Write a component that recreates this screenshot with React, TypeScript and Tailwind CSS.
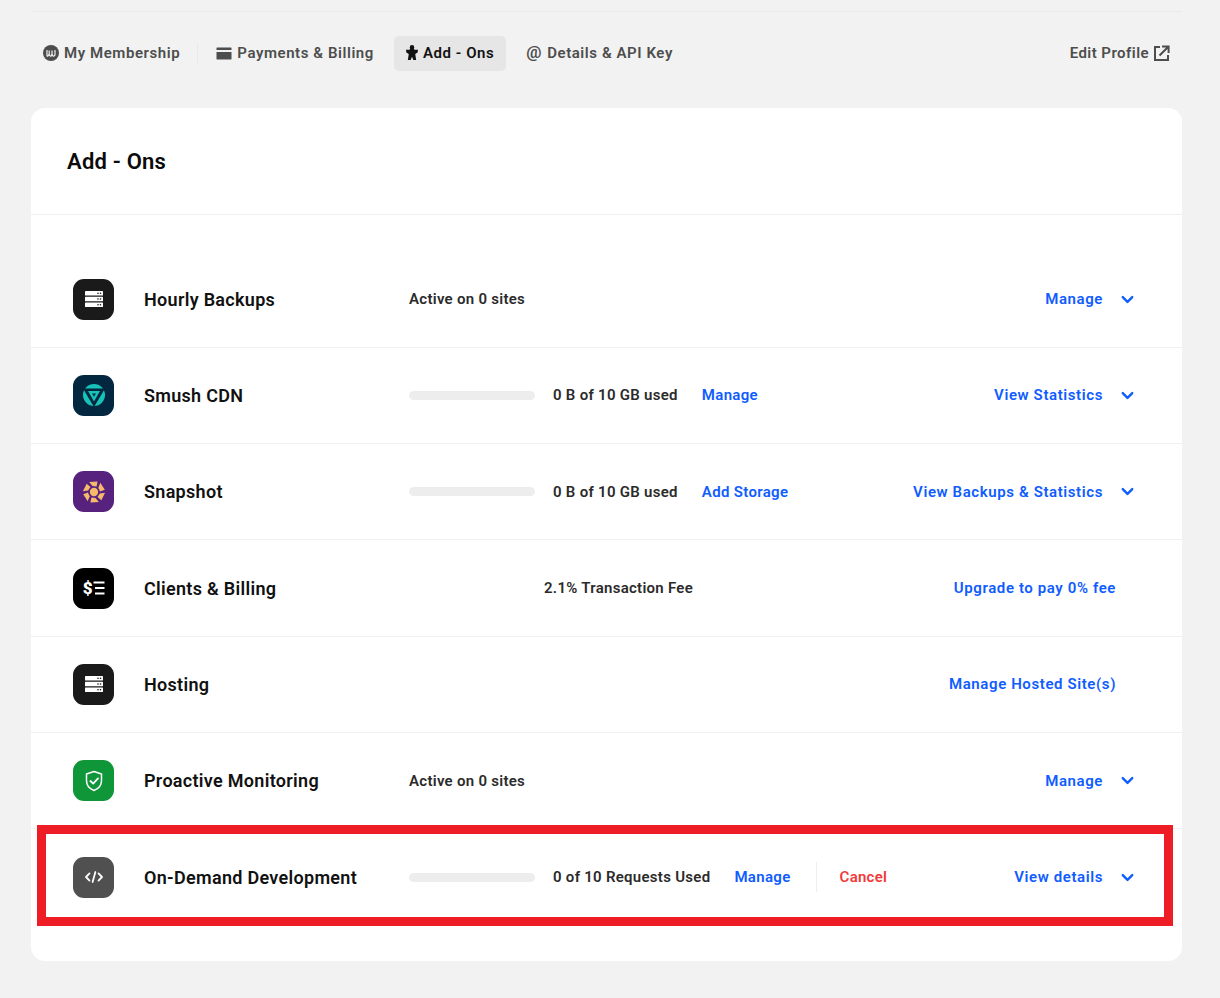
import { ChevronDown } from 'lucide-react';
import type { ReactNode } from 'react';

function ServerIcon() {
  return (
    <svg width="20" height="20" viewBox="0 0 20 20" fill="none">
      <rect x="1" y="2" width="18" height="4.6" rx="0.6" fill="#fff" />
      <rect x="1" y="7.7" width="18" height="4.6" rx="0.6" fill="#fff" />
      <rect x="1" y="13.4" width="18" height="4.6" rx="0.6" fill="#fff" />
      <circle cx="14" cy="4.3" r="0.8" fill="#1a1a1a" />
      <circle cx="16.5" cy="4.3" r="0.8" fill="#1a1a1a" />
      <circle cx="14" cy="10" r="0.8" fill="#1a1a1a" />
      <circle cx="16.5" cy="10" r="0.8" fill="#1a1a1a" />
      <circle cx="14" cy="15.7" r="0.8" fill="#1a1a1a" />
      <circle cx="16.5" cy="15.7" r="0.8" fill="#1a1a1a" />
    </svg>
  );
}

function SmushIcon() {
  return (
    <svg width="24" height="24" viewBox="0 0 24 24">
      <circle cx="12" cy="12" r="11" fill="#17c3b8" />
      <path d="M1 5.6 H23 L12 24 Z" fill="#03273f" />
      <path d="M6 8 H18 L12 18.4 Z" fill="#17c3b8" />
      <path d="M10 10.4 H14 L12 13.8 Z" fill="#03273f" />
    </svg>
  );
}

function SnapshotIcon() {
  return (
    <svg width="24" height="24" viewBox="0 0 22 22" fill="#f7b96b">
      <circle cx="11" cy="11" r="3.8" />
      {[0, 60, 120, 180, 240, 300].map((a) => (
        <path key={a} d="M6.6 1.8 L14.2 1.4 L13.4 5.9 L9.6 5.6 Z" transform={`rotate(${a} 11 11)`} />
      ))}
    </svg>
  );
}

function ClientsIcon() {
  return (
    <svg width="24" height="20" viewBox="0 0 24 20" fill="#fff">
      <rect x="11.5" y="3.5" width="11" height="2" />
      <rect x="13" y="9" width="9.5" height="2" />
      <rect x="13" y="14.5" width="9.5" height="2" />
      <text x="0.8" y="16" fontFamily="Roboto, sans-serif" fontWeight="900" fontSize="17">$</text>
    </svg>
  );
}

function ShieldIcon() {
  return (
    <svg width="20" height="22" viewBox="0 0 20 22" fill="none" stroke="#fff" strokeLinejoin="round" strokeLinecap="round">
      <path d="M10 1.5 L17.5 4 V10.5 C17.5 15.5 14 19 10 20.5 C6 19 2.5 15.5 2.5 10.5 V4 Z" strokeWidth="1.5" />
      <path d="M6.4 11 L9.2 13.6 L14 8.4" strokeWidth="1.8" />
    </svg>
  );
}

function CodeIcon() {
  return (
    <svg width="20" height="14" viewBox="0 0 20 14" fill="none" stroke="#fff" strokeWidth="1.8" strokeLinecap="round" strokeLinejoin="round">
      <path d="M5.5 3.4 L2 7 L5.5 10.6" />
      <path d="M14.5 3.4 L18 7 L14.5 10.6" />
      <path d="M11.4 2 L8.6 12" />
    </svg>
  );
}

function MembershipIcon() {
  return (
    <svg className="-translate-y-px" width="16" height="16" viewBox="0 0 16 16" fill="none">
      <circle cx="8" cy="8" r="8" fill="#4d4d4d" />
      <path d="M4 5 V10.5 Q4 11.5 5 11 L6.2 9 V5.5 M6.2 9 Q7 11.6 8.2 11 L9 9 V5.5 M9 9 Q9.8 11.6 11 11 Q12 10.5 12 9.5 V5" stroke="#f2f2f2" strokeWidth="1.2" />
    </svg>
  );
}

function CardIcon() {
  return (
    <svg width="16" height="13" viewBox="0 0 16 13" fill="#4d4d4d">
      <rect x="0.5" y="0.5" width="15" height="2.6" rx="0.4" />
      <rect x="0.5" y="5" width="15" height="7.5" rx="0.4" />
    </svg>
  );
}

function PieceIcon() {
  return (
    <svg className="-translate-y-px" width="12" height="15" viewBox="0 0 13 15" preserveAspectRatio="none" fill="#111">
      <circle cx="6.5" cy="2.4" r="2.4" />
      <path d="M4.4 3.6 H8.6 L9 4.8 H13 L12.6 7.6 L10 9 L11 15 H8 L6.5 11.8 L5 15 H2 L3 9 L0.4 7.6 L0 4.8 H4 Z" />
    </svg>
  );
}

function EditIcon() {
  return (
    <svg width="17" height="17" viewBox="0 0 17 17" fill="none" stroke="#4d4d4d" strokeWidth="2">
      <path d="M7 2 H2 V15 H15 V10" />
      <path d="M6.5 10.5 L15 2 M9 1.4 H15.6 V8" />
    </svg>
  );
}

function Chevron() {
  return <ChevronDown className="ml-[15px] w-[19px] h-[19px] text-[#0f5cff]" strokeWidth={3} />;
}

function Bar() {
  return <div className="w-[126px] h-[9px] rounded-full bg-[#ededed] mr-[18px]" />;
}

function Link({ children }: { children: ReactNode }) {
  return <span className="text-[15px] font-semibold tracking-[0.6px] text-[#0f5cff]">{children}</span>;
}

// the links beside the usage text sit tighter than the ones in the right column
function InlineLink({ children, className }: { children: ReactNode; className?: string }) {
  return <span className={`text-[15px] font-semibold tracking-[0.33px] text-[#0f5cff] ${className ?? ''}`}>{children}</span>;
}

function Usage({ children }: { children: ReactNode }) {
  return <span className="text-[15px] font-semibold tracking-[0.28px] text-[#2b2b2b]">{children}</span>;
}

function Row({ icon, bg, name, last, children, right }: { icon: ReactNode; bg: string; name: string; last?: boolean; children?: ReactNode; right: ReactNode }) {
  return (
    <div className={`flex items-center pl-[42px] ${last ? 'h-[95.33px]' : 'h-[96.33px] border-b border-[#f0f0f0]'}`}>
      <div className={`w-[41px] h-[41px] rounded-[11px] flex items-center justify-center shrink-0 ${bg}`}>{icon}</div>
      <div className="w-[265px] ml-[30px] shrink-0 text-[18px] font-semibold tracking-[0.3px] text-[#111]">{name}</div>
      <div className="flex flex-1 items-center">{children}</div>
      {right}
    </div>
  );
}

function Tab({ icon, label, active }: { icon: ReactNode; label: string; active?: boolean }) {
  return (
    <div className={`flex items-center gap-[5px] h-[35px] px-[12px] rounded-[5px] text-[15px] font-semibold tracking-[0.57px] ${active ? 'bg-[#e6e6e6] text-[#111]' : 'text-[#4d4d4d]'}`}>
      {icon}
      <span>{label}</span>
    </div>
  );
}

export default function App() {
  return (
    <div className="relative w-[1220px] h-[998px] overflow-hidden bg-[#f2f2f2] font-['Roboto',sans-serif] px-[31px] pt-[11px]">
      <div className="w-[1151px] border-t border-[#e9e9e9]" />
      <div className="flex items-center h-[35px] mt-[24px]">
        <Tab icon={<MembershipIcon />} label="My Membership" />
        <div className="w-px h-[19px] bg-[#e9e9e9] ml-[5px] mr-[6px]" />
        <Tab icon={<CardIcon />} label="Payments & Billing" />
        <div className="w-[8px]" />
        <Tab active icon={<PieceIcon />} label="Add - Ons" />
        <div className="w-[8px]" />
        <Tab icon={<span className="text-[17px] leading-none font-semibold -translate-y-px">@</span>} label="Details & API Key" />
        <div className="flex items-center gap-[4px] ml-auto mr-[19px] text-[15px] font-semibold tracking-[0.45px] text-[#4d4d4d]">
          Edit Profile
          <EditIcon />
        </div>
      </div>

      <div className="w-[1151px] h-[853px] mt-[37px] bg-white rounded-[14px]">
        <div className="h-[107px] flex items-center pl-[36px] border-b border-[#f0f0f0] text-[22px] font-semibold tracking-[0.2px] text-[#0b0b0b]">Add - Ons</div>
        <div className="pt-[36.5px]">
          <Row
            icon={<ServerIcon />}
            bg="bg-[#1a1a1a]"
            name="Hourly Backups"
            right={<div className="flex items-center pr-[45px]"><Link>Manage</Link><Chevron /></div>}
          >
            <Usage>Active on 0 sites</Usage>
          </Row>
          <Row
            icon={<SmushIcon />}
            bg="bg-[#03273f]"
            name="Smush CDN"
            right={<div className="flex items-center pr-[45px]"><Link>View Statistics</Link><Chevron /></div>}
          >
            <Bar />
            <Usage>0 B of 10 GB used</Usage>
            <InlineLink className="ml-[24px]">Manage</InlineLink>
          </Row>
          <Row
            icon={<SnapshotIcon />}
            bg="bg-[#57227e]"
            name="Snapshot"
            right={<div className="flex items-center pr-[45px]"><Link>View Backups & Statistics</Link><Chevron /></div>}
          >
            <Bar />
            <Usage>0 B of 10 GB used</Usage>
            <InlineLink className="ml-[24px]">Add Storage</InlineLink>
          </Row>
          <Row
            icon={<ClientsIcon />}
            bg="bg-black"
            name="Clients & Billing"
            right={<div className="pr-[66px]"><Link>Upgrade to pay 0% fee</Link></div>}
          >
            <div className="ml-[135px]"><Usage>2.1% Transaction Fee</Usage></div>
          </Row>
          <Row
            icon={<ServerIcon />}
            bg="bg-[#1a1a1a]"
            name="Hosting"
            right={<div className="pr-[66px]"><Link>Manage Hosted Site(s)</Link></div>}
          />
          <Row
            icon={<ShieldIcon />}
            bg="bg-[#0e9638]"
            name="Proactive Monitoring"
            right={<div className="flex items-center pr-[45px]"><Link>Manage</Link><Chevron /></div>}
          >
            <Usage>Active on 0 sites</Usage>
          </Row>
          <Row
            last
            icon={<CodeIcon />}
            bg="bg-[#505050]"
            name="On-Demand Development"
            right={<div className="flex items-center pr-[45px]"><Link>View details</Link><Chevron /></div>}
          >
            <Bar />
            <Usage>0 of 10 Requests Used</Usage>
            <InlineLink className="ml-[24px]">Manage</InlineLink>
            <div className="w-px h-[30px] bg-[#eeeeee] ml-[25px]" />
            <span className="ml-[23px] text-[15px] font-semibold tracking-[0.25px] text-[#f23a3a]">Cancel</span>
          </Row>
        </div>
      </div>

      {/* annotation box drawn over the last row */}
      <div className="absolute left-[37px] top-[825px] w-[1136px] h-[101px] border-[9px] border-[#ee1c25]" />
    </div>
  );
}
